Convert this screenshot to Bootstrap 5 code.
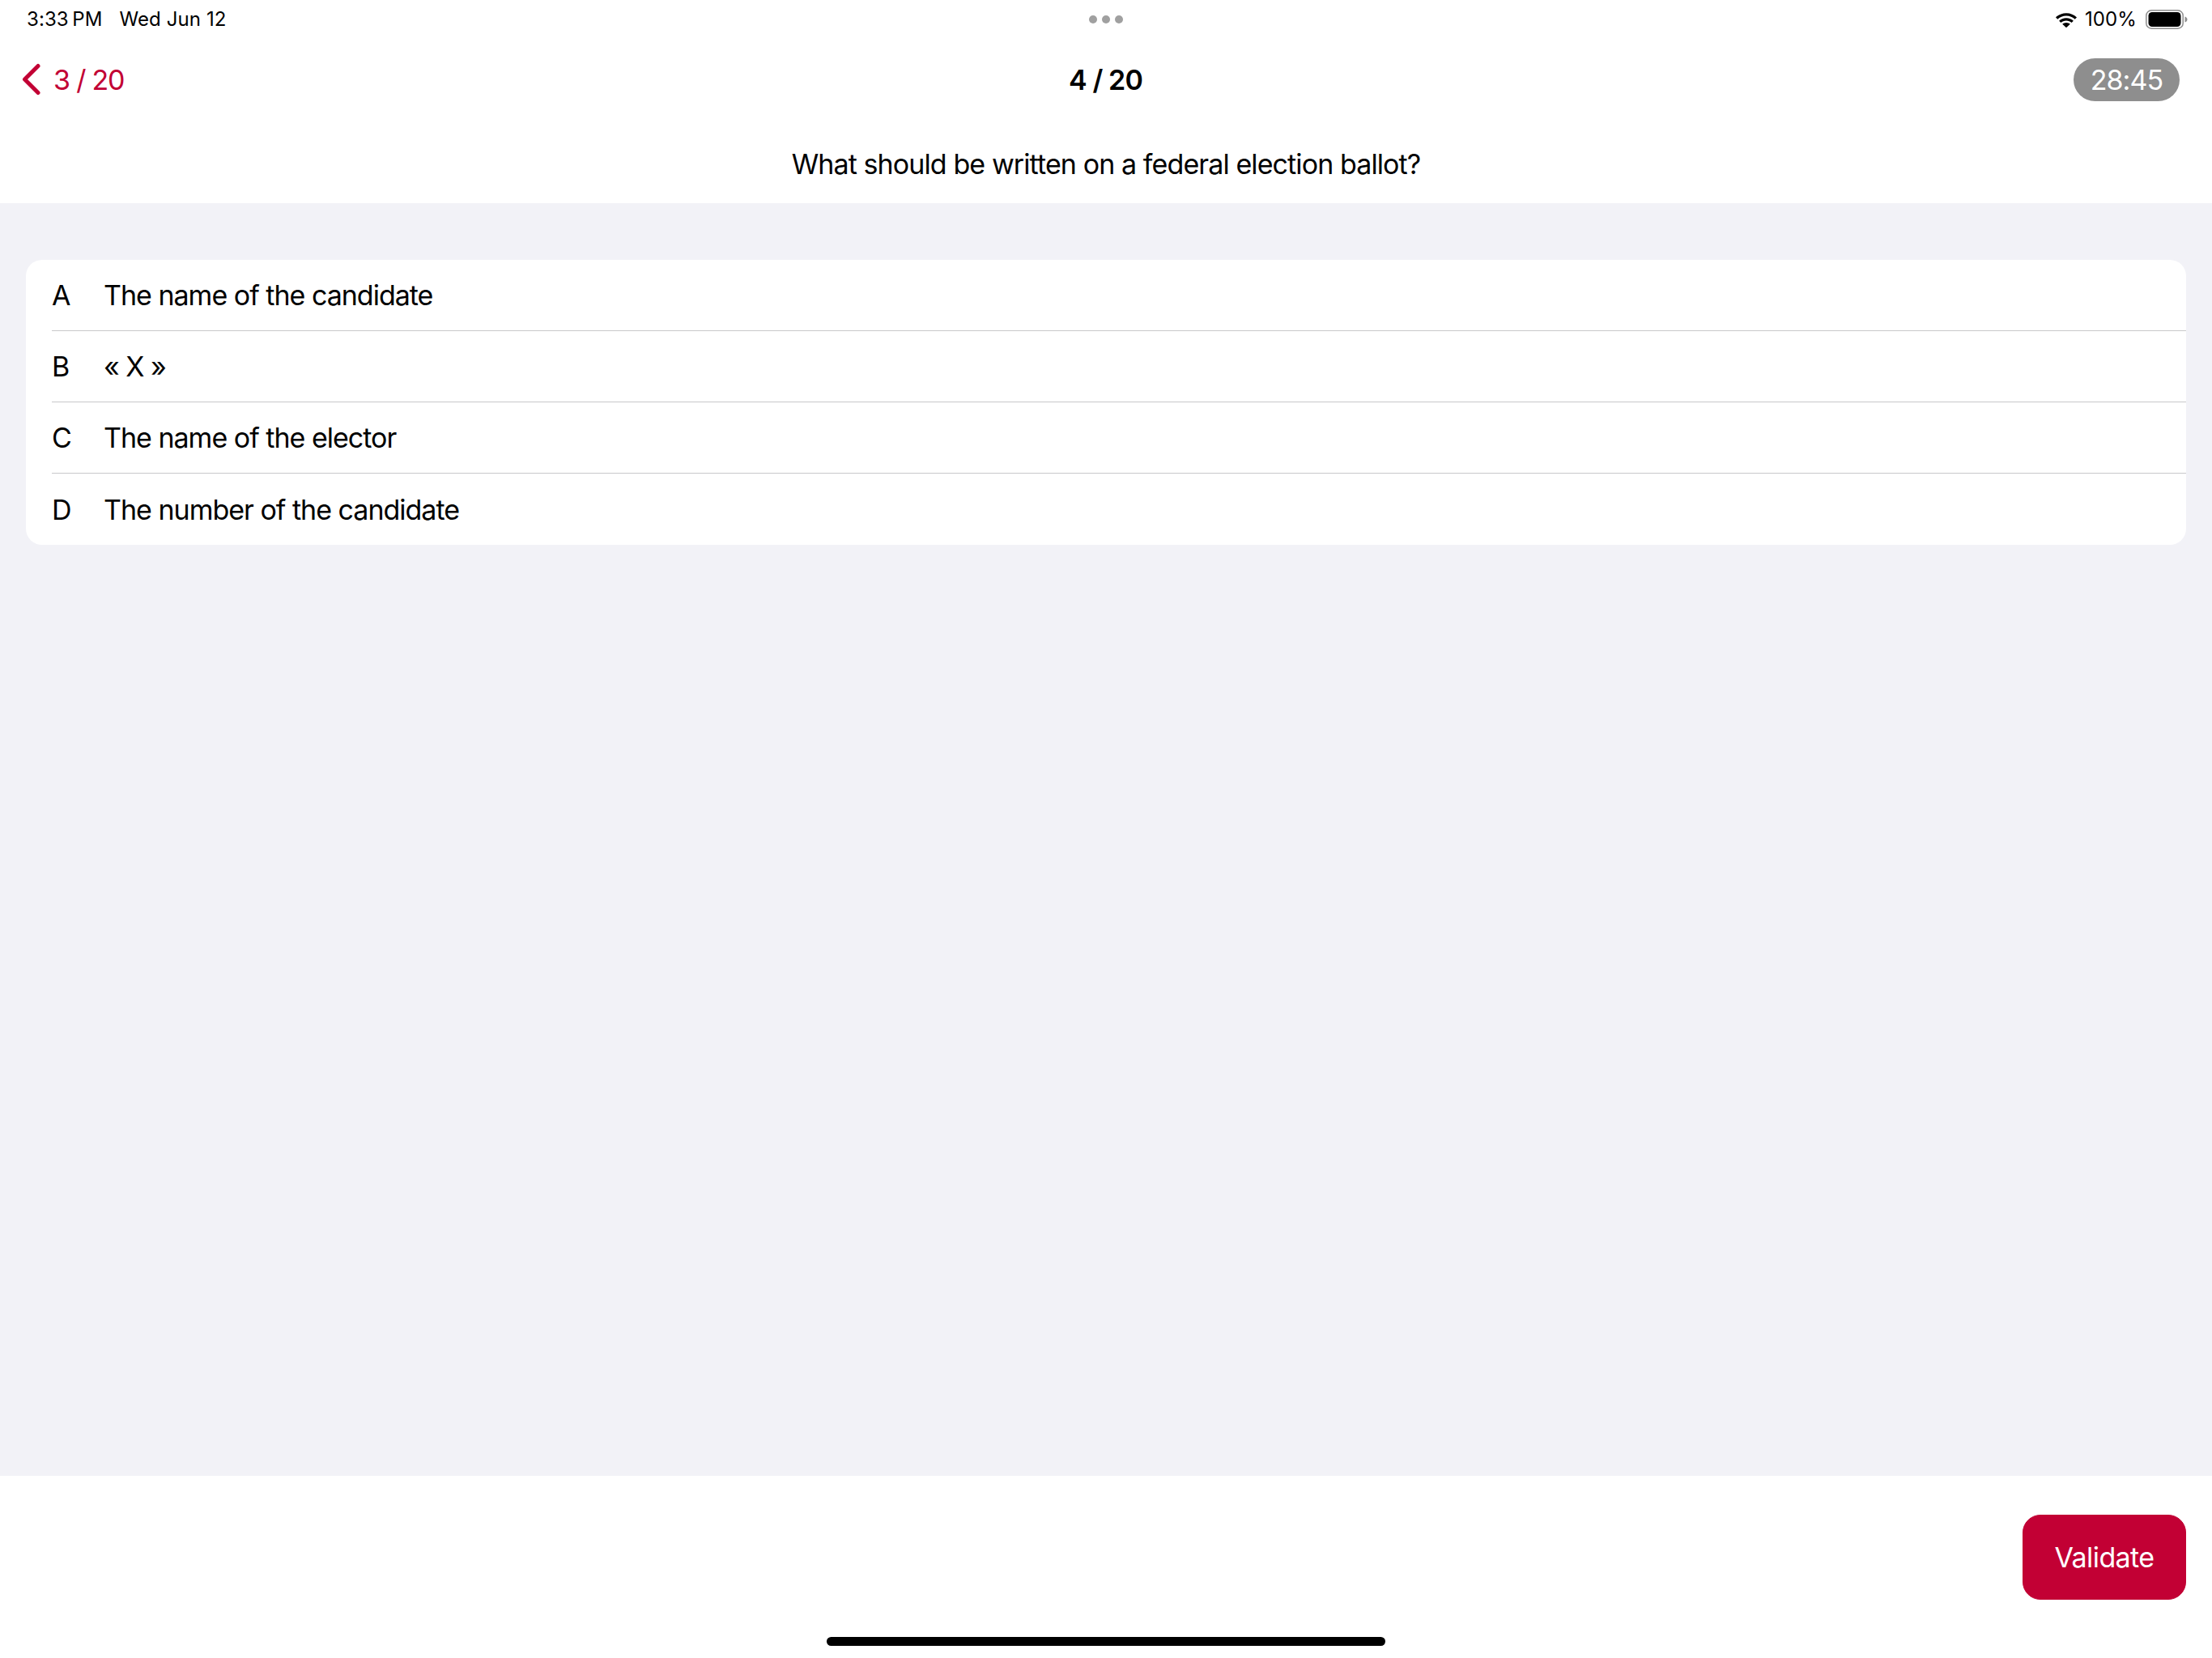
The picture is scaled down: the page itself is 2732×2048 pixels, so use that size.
<!DOCTYPE html>
<html lang="en">
<head>
<meta charset="utf-8">
<title>Question 4 / 20</title>
<link href="https://cdn.jsdelivr.net/npm/bootstrap@5.3.0/dist/css/bootstrap.min.css" rel="stylesheet">
<style>
html, body { height: 100%; }
body { font-family: Inter, "Liberation Sans", sans-serif; font-size: 34px; color: #000; background: #fff; letter-spacing: -0.9px; }
.screen { height: 2048px; }
.status-bar { height: 48px; padding: 0 30px 0 33px; font-size: 24px; line-height: 1; letter-spacing: 0.1px; }
.status-side { flex: 1 1 0; }
.status-date { margin-left: 21px; }
.dot-item { width: 10px; height: 10px; border-radius: 50%; background: #a0a0a0; }
.dots-wrap { gap: 6px; margin-right: 3px; }
.wifi-svg { width: 28px; height: 20px; margin-right: 9px; }
.battery-svg { width: 52px; height: 24px; margin-left: 11px; }
.top-bar { height: 100px; padding: 0 40px 0 26px; }
.top-side { flex: 1 1 0; }
.back-link { color: #c20034; text-decoration: none; gap: 15px; letter-spacing: -1.2px; }
.chevron-svg { width: 25px; height: 40px; }
.progress-title { font-weight: 600; margin-left: 13px; }
.timer-pill { background: #8e8e8e; color: #fff; height: 53px; width: 131px; border-radius: 27px; }
.question-row { height: 103px; padding-top: 6px; }
.content-area { background: #f2f2f7; padding: 70px 32px 0; }
.answer-list { border-radius: 20px; --bs-list-group-border-width: 0; }
.answer-item { padding: 0 0 0 32px; font-size: 34px; color: #000; letter-spacing: -1px; }
.answer-inner { height: 88px; border-bottom: 1px solid #c8c8ca; }
.answer-item:last-child .answer-inner { border-bottom: 0; }
.answer-letter { width: 64px; }
.footer-area { height: 225px; padding: 48px 32px 15px; }
.validate-btn { width: 202px; height: 105px; border-radius: 22px; background: #c20034; border-color: #c20034; color: #fff; font-size: 34px; letter-spacing: -0.6px; }
.validate-btn:hover { background: #c20034; border-color: #c20034; color: #fff; }
.home-bar { width: 690px; height: 11px; border-radius: 6px; background: #000; margin-top: 46px; }
</style>
</head>
<body>
<div class="screen d-flex flex-column">
  <header class="bg-white">
    <div class="status-bar d-flex align-items-center">
      <div class="status-side"><span>3:33&#8201;PM</span><span class="status-date">Wed Jun 12</span></div>
      <div class="dots-wrap d-flex"><span class="dot-item"></span><span class="dot-item"></span><span class="dot-item"></span></div>
      <div class="status-side d-flex align-items-center justify-content-end">
        <svg class="wifi-svg" viewBox="0 0 28 20" aria-hidden="true"><path d="M14 2.2c5.1 0 9.7 2 13 5.2l-2.3 2.4C22 7.100 18.200 5.500 14 5.500S6 7.100 3.300 9.800L1 7.400C4.300 4.200 8.900 2.200 14 2.200z"/><path d="M14 8.200c3.500 0 6.600 1.300 8.900 3.500l-2.300 2.400c-1.700-1.600-4-2.600-6.600-2.600s-4.900 1-6.600 2.600l-2.300-2.400c2.300-2.200 5.400-3.500 8.900-3.500z"/><path d="M14 14c1.900 0 3.500.7 4.800 1.800L14 20.200 9.200 15.800C10.500 14.700 12.100 14 14 14z"/></svg>
        <span>100%</span>
        <svg class="battery-svg" viewBox="0 0 52 24" aria-hidden="true"><rect x="0.800" y="0.800" width="45.400" height="22.400" rx="6.500" fill="none" stroke="#8e8e8e" stroke-width="1.500"/><rect x="3.500" y="3" width="40" height="18" rx="4.500"/><path d="M48.500 8.500c1.800.5 3 2 3 3.500s-1.200 3-3 3.500z" fill="#8e8e8e"/></svg>
      </div>
    </div>
    <div class="top-bar d-flex align-items-center">
      <div class="top-side d-flex align-items-center">
        <a class="back-link d-flex align-items-center" href="#">
          <svg class="chevron-svg" viewBox="0 0 25 40" aria-hidden="true"><path d="M21 3.500 4.500 20 21 36.500" fill="none" stroke="#c20034" stroke-width="5" stroke-linecap="round" stroke-linejoin="round"/></svg>
          <span>3 / 20</span>
        </a>
      </div>
      <div class="progress-title">4 / 20</div>
      <div class="top-side d-flex justify-content-end">
        <div class="timer-pill d-flex align-items-center justify-content-center">28:45</div>
      </div>
    </div>
    <div class="question-row d-flex align-items-center justify-content-center">What should be written on a federal election ballot?</div>
  </header>
  <main class="content-area flex-grow-1">
    <ul class="answer-list list-group">
      <li class="answer-item list-group-item"><div class="answer-inner d-flex align-items-center"><span class="answer-letter">A</span><span>The name of the candidate</span></div></li>
      <li class="answer-item list-group-item"><div class="answer-inner d-flex align-items-center"><span class="answer-letter">B</span><span>« X »</span></div></li>
      <li class="answer-item list-group-item"><div class="answer-inner d-flex align-items-center"><span class="answer-letter">C</span><span>The name of the elector</span></div></li>
      <li class="answer-item list-group-item"><div class="answer-inner d-flex align-items-center"><span class="answer-letter">D</span><span>The number of the candidate</span></div></li>
    </ul>
  </main>
  <footer class="footer-area bg-white d-flex flex-column">
    <div class="d-flex justify-content-end"><button type="button" class="btn validate-btn">Validate</button></div>
    <div class="home-bar align-self-center"></div>
  </footer>
</div>
<script src="https://cdn.jsdelivr.net/npm/bootstrap@5.3.0/dist/js/bootstrap.bundle.min.js"></script>
</body>
</html>
